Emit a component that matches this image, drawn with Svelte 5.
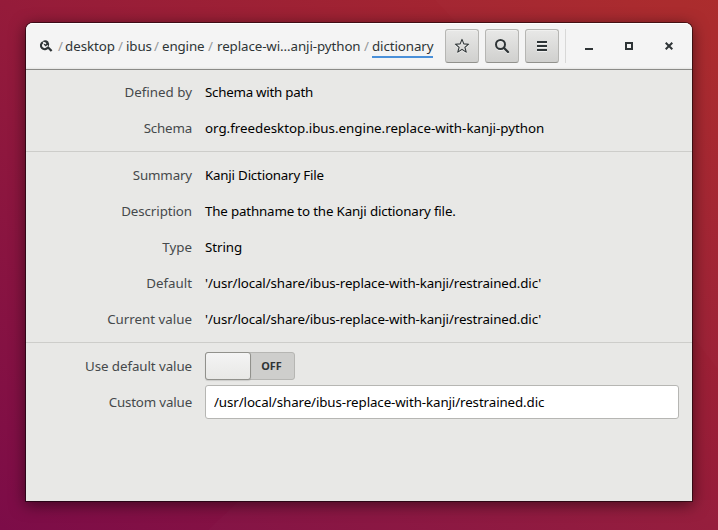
<script>
  const crumbs = [
    { text: 'desktop', width: 50, spacing: -0.04, slash: 7, gap: 3 },
    { text: 'ibus', width: 25, spacing: -0.1, slash: 8, gap: 3 },
    { text: 'engine', width: 42, spacing: -0.12, slash: 8, gap: 4 },
    { text: 'replace-wi…anji-python', width: 143, spacing: -0.09, slash: 9, gap: 4 }
  ];
  const groups = [
    [
      { label: 'Defined by', value: 'Schema with path', spacing: -0.25 },
      { label: 'Schema', value: 'org.freedesktop.ibus.engine.replace-with-kanji-python', spacing: -0.01, labelSpacing: -0.18 }
    ],
    [
      { label: 'Summary', value: 'Kanji Dictionary File', spacing: -0.2, labelSpacing: -0.15 },
      { label: 'Description', value: 'The pathname to the Kanji dictionary file.', spacing: -0.165, labelSpacing: -0.08 },
      { label: 'Type', value: 'String', spacing: -0.08 },
      { label: 'Default', value: "'/usr/local/share/ibus-replace-with-kanji/restrained.dic'", spacing: -0.105 },
      { label: 'Current value', value: "'/usr/local/share/ibus-replace-with-kanji/restrained.dic'", spacing: -0.105 }
    ]
  ];
  let custom = $state('/usr/local/share/ibus-replace-with-kanji/restrained.dic');
</script>

<div class="desktop">
  <svg class="facets" width="718" height="530" viewBox="0 0 718 530" aria-hidden="true">
    <path d="M435 0 460 27 718 370V0z" fill="#fff" opacity=".012" />
    <path d="M240 500 208 530H718V500z" fill="#fff" opacity=".015" />
  </svg>
  <div class="window">
    <header>
      <nav>
        <svg class="root" width="14" height="14" viewBox="0 0 14 14">
          <path d="M3.9 3.2A3.7 3.7 0 1 0 8.9 8.2" fill="none" stroke="#2e3436" stroke-width="2.1" />
          <path d="M3.4 2.4C5.2 1 7.6 1 9.2 2.5L10.2 5 9.8 7.4 8.4 6 6.6 7.4 4.6 5.4 5.4 4.7 6.6 5.5 7.4 4.4 6.3 3.2z" fill="#2e3436" />
          <path d="M8.4 7.8 12.6 12" stroke="#2e3436" stroke-width="2.3" />
        </svg>
        {#each crumbs as c}
          <span class="slash" style:width="{c.slash}px">/</span>
          <span class="crumb" style:width="{c.width}px" style:letter-spacing="{c.spacing}px" style:margin-right="{c.gap}px">{c.text}</span>
        {/each}
        <span class="slash last">/</span>
        <span class="crumb current">dictionary</span>
      </nav>
      <div class="buttons">
        <button aria-label="Bookmark">
          <svg width="16" height="16" viewBox="0 0 16 16"><path d="M8 1.4 9.8 5.9 14.6 6.2 10.9 9.3 12.2 14.1 8 11.4 3.8 14.1 5.1 9.3 1.4 6.2 6.2 5.9z" fill="none" stroke="#2e3436" stroke-width="1.1" stroke-linejoin="round" /></svg>
        </button>
        <button aria-label="Search">
          <svg width="16" height="16" viewBox="0 0 16 16"><circle cx="6.5" cy="6.5" r="4.5" fill="none" stroke="#2e3436" stroke-width="2" /><path d="M9.8 9.8 14 14" stroke="#2e3436" stroke-width="2.3" stroke-linecap="round" /></svg>
        </button>
        <button aria-label="Menu">
          <svg width="16" height="16" viewBox="0 0 16 16"><path d="M3 4h10M3 8h10M3 12h10" stroke="#2e3436" stroke-width="2" /></svg>
        </button>
      </div>
      <div class="controls">
        <svg width="8" height="8" viewBox="0 0 8 8"><path d="M0 6h8v2H0z" fill="#2e3436" /></svg>
        <svg width="8" height="8" viewBox="0 0 8 8"><path d="M1 1h6v6H1z" fill="none" stroke="#2e3436" stroke-width="2" /></svg>
        <svg width="8" height="8" viewBox="0 0 8 8"><path d="M.7.7 7.3 7.3M7.3.7.7 7.3" stroke="#2e3436" stroke-width="2" /></svg>
      </div>
    </header>
    <main>
      {#each groups as group}
        <section>
          {#each group as row}
            <div class="row">
              <span class="label" style:letter-spacing="{row.labelSpacing ?? 0}px">{row.label}</span>
              <span class="value" style:letter-spacing="{row.spacing}px">{row.value}</span>
            </div>
          {/each}
        </section>
      {/each}
      <section>
        <div class="row">
          <span class="label tight">Use default value</span>
          <div class="switch"><span class="knob"></span><span class="off">OFF</span></div>
        </div>
        <div class="row">
          <span class="label tighter">Custom value</span>
          <input bind:value={custom} aria-label="Custom value" spellcheck="false" />
        </div>
      </section>
    </main>
  </div>
</div>

<style>
  :global(body) { margin: 0; }
  .desktop {
    position: relative;
    box-sizing: border-box;
    width: 718px;
    height: 530px;
    padding: 23px 26px 29px;
    overflow: hidden;
    background: linear-gradient(to top right, #7c0c48 0%, #951b3a 50%, #ac2b2b 100%);
    font: 13.33px/18px "Noto Sans", sans-serif;
    color: #000;
  }
  .facets { position: absolute; left: 0; top: 0; }
  .window {
    position: relative;
    height: 478px;
    border-radius: 7px 7px 0 0;
    background: #e8e8e6;
    box-shadow: 0 0 0 1px rgba(0, 0, 0, .5), 0 3px 15px 1px rgba(0, 0, 0, .5);
  }
  header {
    box-sizing: border-box;
    display: flex;
    height: 47px;
    padding: 6px 0 0 12px;
    border-bottom: 1px solid #8b8b88;
    border-radius: 7px 7px 0 0;
    background: linear-gradient(#f4f4f4 44px, #e4e4e2 46px);
    box-shadow: inset 0 1px #fff;
  }
  nav { display: flex; width: 407px; height: 34px; align-items: center; white-space: pre; color: #2e3436; }
  .root { flex: none; margin: -1px 5px 0 1px; }
  .slash { flex: none; color: #96999a; }
  .slash.last { width: 8px; }
  .crumb { flex: none; }
  .current {
    box-sizing: border-box;
    width: 61px;
    height: 21px;
    margin-top: 3px;
    border-bottom: 2px solid #4a90d9;
    letter-spacing: -.1px;
  }
  .buttons { display: flex; gap: 6px; }
  button {
    display: grid;
    place-items: center;
    box-sizing: border-box;
    width: 34px;
    height: 34px;
    padding: 0;
    border: 1px solid #b6b6b3;
    border-bottom-color: #91918c;
    border-radius: 3px;
    background: linear-gradient(#e8e8e7, #d0d0ce);
    box-shadow: inset 0 1px #f0f0ef;
  }
  button svg { filter: drop-shadow(0 1px rgba(255, 255, 255, .6)); }
  .controls { display: flex; height: 34px; align-items: center; gap: 32px; margin-left: 6px; padding-left: 19px; border-left: 1px solid #d8d8d7; }
  section { padding: 5px 0; }
  section:first-child { padding-top: 4px; }
  section + section { border-top: 1px solid #cdcdca; }
  .row { display: flex; height: 36px; align-items: center; white-space: nowrap; }
  .label { width: 166px; margin-right: 13px; text-align: right; color: #45494b; }
  .tight { letter-spacing: -.08px; }
  .tighter { letter-spacing: -.16px; }
  .switch {
    display: flex;
    box-sizing: border-box;
    width: 90px;
    height: 28px;
    border: 1px solid #b6b6b3;
    border-radius: 3px;
    background: #cececc;
  }
  .knob {
    box-sizing: border-box;
    width: 46px;
    height: 28px;
    margin: -1px 0 0 -1px;
    border: 1px solid #91918c;
    border-radius: 3px;
    background: linear-gradient(#f4f4f4, #e8e8e6);
    box-shadow: 0 1px 1px rgba(0, 0, 0, .12);
  }
  .off { width: 41px; text-align: center; font-size: 10.9px; line-height: 26px; font-weight: 700; color: #2e3436; }
  input {
    box-sizing: border-box;
    width: 474px;
    height: 34px;
    padding: 0 8px;
    border: 1px solid #b6b6b3;
    border-radius: 3px;
    outline: 0;
    background: #fff;
    font: inherit;
    letter-spacing: -.1px;
    color: #000;
  }
</style>
